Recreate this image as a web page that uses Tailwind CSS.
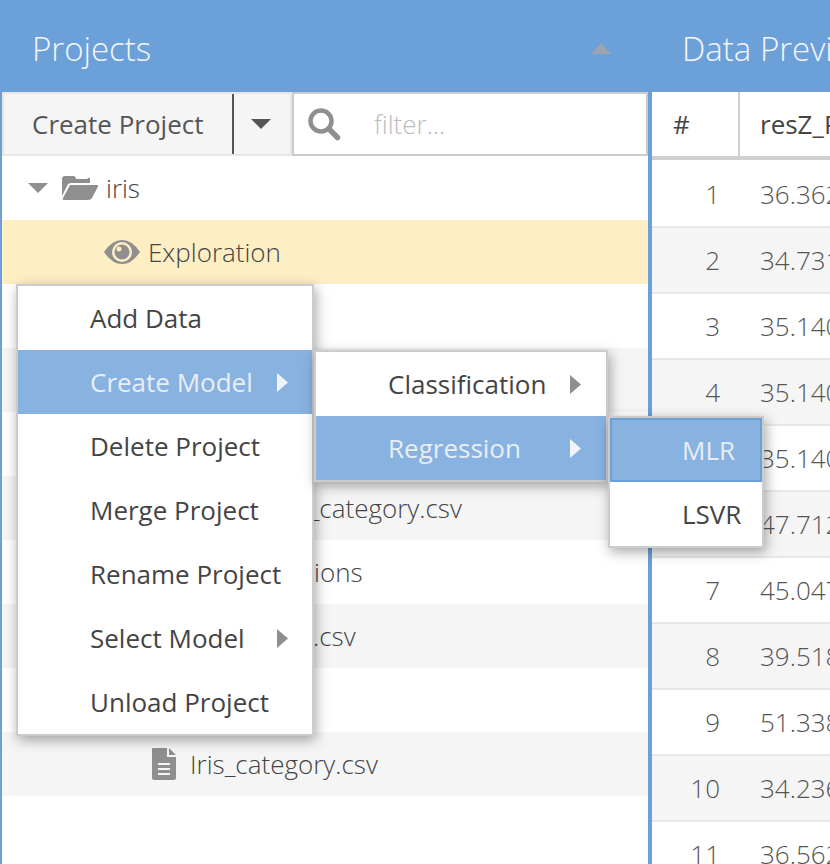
<!DOCTYPE html>
<html>
<head>
<meta charset="utf-8">
<script src="https://cdn.jsdelivr.net/npm/@tailwindcss/browser@4"></script>
</head>
<body class="m-0 bg-white overflow-hidden font-['Open_Sans',sans-serif] text-[#444]">
<div class="relative w-[830px] h-[864px] overflow-hidden flex">

  <!-- Projects panel -->
  <section class="w-[652px] h-full shrink-0 flex flex-col border-l-2 border-r-4 border-[#6ca0d8]">
    <header class="h-[92px] -ml-[2px] -mr-[4px] pl-[32px] pr-[41px] bg-[#6ca0d8] flex items-center justify-between shrink-0">
      <h2 class="pt-[4px] text-[33px] font-light text-[#f4f6f9] leading-none">Projects</h2>
      <svg width="20" height="11" viewBox="0 0 20 11" class="mt-[5px] fill-[#9aa5b1]"><path d="M10 0 20 11H0z"/></svg>
    </header>
    <div class="h-[64px] flex shrink-0">
      <div class="w-[290px] flex bg-[#f5f5f5] border-2 border-[#e6e6e6]">
        <span class="w-[230px] pl-[28px] flex items-center text-[26px] text-[#555] border-r-2 border-r-[#555]">Create Project</span>
        <span class="flex-1 pr-[2px] flex items-center justify-center"><svg width="20" height="10" viewBox="0 0 20 10" class="fill-[#555]"><path d="M0 0H20L10 10z"/></svg></span>
      </div>
      <div class="flex-1 flex items-center border-2 border-[#ccc] pl-[14px]">
        <svg width="33" height="33" viewBox="0 0 33 33" fill="none" stroke="#8f8f8f"><circle cx="13" cy="13" r="10.500" stroke-width="4.500"/><path d="M21 21 29.500 29.500" stroke-width="5.500" stroke-linecap="round"/></svg>
        <span class="ml-[33px] text-[26px] font-light text-[#bbb]">filter...</span>
      </div>
    </div>
    <div class="flex-1 text-[26px] font-light">
      <div class="h-[64px] flex items-center pl-[26px]">
        <svg width="20" height="10" viewBox="0 0 20 10" class="fill-[#8f8f8f]"><path d="M0 0H20L10 10z"/></svg>
        <svg width="36" height="24" viewBox="0 0 36 24" class="ml-[14px] fill-[#8f8f8f]"><path d="M0 3Q0 0 3 0H11Q14 0 14 3H25Q28 0 28 3V7H9Q6 7 5 10L0 20ZM8 9H35Q37 9 35.500 11.500L30 22Q29 24 26 24H2Q0 24 1 22Z" /></svg>
        <span class="ml-[8px]">iris</span>
      </div>
      <div class="h-[64px] flex items-center pl-[102px] bg-[#fdeec3]">
        <svg width="36" height="24" viewBox="0 0 36 24"><path d="M0 12Q8 0 18 0T36 12Q28 24 18 24T0 12Z" fill="#8f8f8f"/><circle cx="18" cy="12" r="10" fill="#fdeec3"/><circle cx="18" cy="12" r="7.500" fill="#8f8f8f"/><circle cx="15" cy="9" r="2.500" fill="#fdeec3"/></svg>
        <span class="ml-[8px]">Exploration</span>
      </div>
      <div class="h-[64px]"></div>
      <div class="h-[64px] bg-[#f5f5f5]"></div>
      <div class="h-[64px]"></div>
      <div class="h-[64px] bg-[#f5f5f5] flex items-center pl-[272px]">Iris_category.csv</div>
      <div class="h-[64px] flex items-center pl-[230px]">Predictions</div>
      <div class="h-[64px] bg-[#f5f5f5] flex items-center pl-[214px]">Iris_data.csv</div>
      <div class="h-[64px]"></div>
      <div class="h-[64px] bg-[#f5f5f5] flex items-center pl-[150px]">
        <svg width="24" height="32" viewBox="0 0 24 32" class="fill-[#8f8f8f]"><path fill-rule="evenodd" d="M1 0H15V9H24V30Q24 32 22 32H2Q0 32 0 30V1Q0 0 1 0ZM17 0 24 7H17ZM6 15V17H18V15ZM6 20V22H18V20ZM6 25V27H18V25Z"/></svg>
        <span class="ml-[14px]">Iris_category.csv</span>
      </div>
    </div>
  </section>

  <!-- Data preview panel -->
  <section class="w-[178px] shrink-0 flex flex-col overflow-hidden">
    <header class="h-[92px] pl-[30px] bg-[#6ca0d8] flex items-center shrink-0">
      <h2 class="pt-[4px] text-[33px] font-light text-[#f4f6f9] leading-none whitespace-nowrap">Data Preview</h2>
    </header>
    <div class="flex h-[68px] border-b-4 border-[#d0d0d0] text-[26px] text-[#444] shrink-0">
      <div class="w-[88px] shrink-0 pl-[21px] flex items-center border-r-2 border-[#d0d0d0]">#</div>
      <div class="shrink-0 pl-[20px] flex items-center whitespace-nowrap">resZ_Pred</div>
    </div>
    <div class="pt-[2px] text-[26px] font-light text-[#555]">
      <div class="h-[66px] flex items-center border-b-2 border-[#e8e8e8]"><span class="w-[68px] shrink-0 text-right">1</span><span class="ml-[40px] shrink-0">36.362</span></div>
      <div class="h-[66px] flex items-center border-b-2 border-[#e8e8e8] bg-[#f5f5f5]"><span class="w-[68px] shrink-0 text-right">2</span><span class="ml-[40px] shrink-0">34.731</span></div>
      <div class="h-[66px] flex items-center border-b-2 border-[#e8e8e8]"><span class="w-[68px] shrink-0 text-right">3</span><span class="ml-[40px] shrink-0">35.140</span></div>
      <div class="h-[66px] flex items-center border-b-2 border-[#e8e8e8] bg-[#f5f5f5]"><span class="w-[68px] shrink-0 text-right">4</span><span class="ml-[40px] shrink-0">35.140</span></div>
      <div class="h-[66px] flex items-center border-b-2 border-[#e8e8e8]"><span class="w-[68px] shrink-0 text-right">5</span><span class="ml-[40px] shrink-0">35.140</span></div>
      <div class="h-[66px] flex items-center border-b-2 border-[#e8e8e8] bg-[#f5f5f5]"><span class="w-[68px] shrink-0 text-right">6</span><span class="ml-[40px] shrink-0">47.712</span></div>
      <div class="h-[66px] flex items-center border-b-2 border-[#e8e8e8]"><span class="w-[68px] shrink-0 text-right">7</span><span class="ml-[40px] shrink-0">45.047</span></div>
      <div class="h-[66px] flex items-center border-b-2 border-[#e8e8e8] bg-[#f5f5f5]"><span class="w-[68px] shrink-0 text-right">8</span><span class="ml-[40px] shrink-0">39.518</span></div>
      <div class="h-[66px] flex items-center border-b-2 border-[#e8e8e8]"><span class="w-[68px] shrink-0 text-right">9</span><span class="ml-[40px] shrink-0">51.338</span></div>
      <div class="h-[66px] flex items-center border-b-2 border-[#e8e8e8] bg-[#f5f5f5]"><span class="w-[68px] shrink-0 text-right">10</span><span class="ml-[40px] shrink-0">34.236</span></div>
      <div class="h-[66px] flex items-center border-b-2 border-[#e8e8e8]"><span class="w-[68px] shrink-0 text-right">11</span><span class="ml-[40px] shrink-0">36.562</span></div>
    </div>
  </section>

  <!-- Context menu -->
  <div class="absolute left-[16px] top-[284px] w-[298px] bg-white border-2 border-[#ccc] shadow-[2px_4px_12px_rgba(0,0,0,0.35)] text-[26px] text-[#444]">
    <div class="h-[64px] pl-[72px] flex items-center">Add Data</div>
    <div class="h-[64px] pl-[72px] flex items-center bg-[#88b2df] text-[#e8eef5]">Create Model<svg width="11" height="19" viewBox="0 0 11 19" class="absolute left-[259px] fill-[#f0f4f8]"><path d="M0 0 11 9.500 0 19z"/></svg></div>
    <div class="h-[64px] pl-[72px] flex items-center">Delete Project</div>
    <div class="h-[64px] pl-[72px] flex items-center">Merge Project</div>
    <div class="h-[64px] pl-[72px] flex items-center">Rename Project</div>
    <div class="h-[64px] pl-[72px] flex items-center">Select Model<svg width="11" height="19" viewBox="0 0 11 19" class="absolute left-[259px] fill-[#8f8f8f]"><path d="M0 0 11 9.500 0 19z"/></svg></div>
    <div class="h-[64px] pl-[72px] flex items-center">Unload Project</div>
  </div>
  <div class="absolute left-[314px] top-[350px] w-[294px] bg-white border-2 border-[#ccc] shadow-[2px_4px_12px_rgba(0,0,0,0.35)] text-[26px] text-[#444]">
    <div class="h-[64px] pl-[72px] flex items-center">Classification<svg width="11" height="19" viewBox="0 0 11 19" class="absolute left-[254px] fill-[#8f8f8f]"><path d="M0 0 11 9.500 0 19z"/></svg></div>
    <div class="h-[64px] pl-[72px] flex items-center bg-[#88b2df] text-[#e8eef5]">Regression<svg width="11" height="19" viewBox="0 0 11 19" class="absolute left-[254px] fill-[#f0f4f8]"><path d="M0 0 11 9.500 0 19z"/></svg></div>
  </div>
  <div class="absolute left-[608px] top-[416px] w-[156px] bg-white border-2 border-[#ccc] shadow-[2px_4px_12px_rgba(0,0,0,0.35)] text-[26px] text-[#444]">
    <div class="h-[64px] pl-[70px] flex items-center bg-[#88b2df] text-[#e8eef5] border-2 border-[#6ca0d8]">MLR</div>
    <div class="h-[64px] pl-[72px] flex items-center">LSVR</div>
  </div>
</div>
</body>
</html>
